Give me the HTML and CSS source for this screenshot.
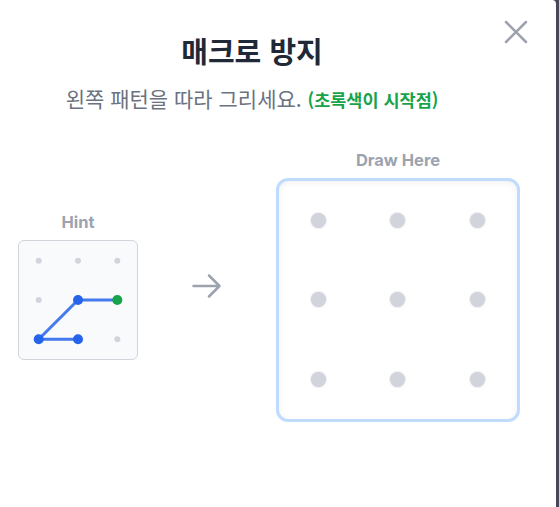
FILE: index.html
```html
<!DOCTYPE html>
<html lang="ko">
<head>
<meta charset="utf-8">
<link rel="stylesheet" href="styles.css">
</head>
<body>
<div class="modal">
  <button class="close" aria-label="close">
    <svg width="24" height="24" viewBox="0 0 24 24"><path d="M2 2 L22 22 M22 2 L2 22" stroke="#9ca3af" stroke-width="2.5" stroke-linecap="round" fill="none"/></svg>
  </button>
  <header class="head">
    <h1 class="title">매크로 방지</h1>
    <p class="sub">왼쪽 패턴을 따라 그리세요. <span class="start">(초록색이 시작점)</span></p>
  </header>
  <div class="row">
    <div class="col">
      <div class="label">Hint</div>
      <div class="hint">
        <svg width="118" height="118" viewBox="0 0 118 118">
          <g fill="#d1d5db">
            <circle cx="19.7" cy="19.7" r="3"/>
            <circle cx="59" cy="19.7" r="3"/>
            <circle cx="98.3" cy="19.7" r="3"/>
            <circle cx="19.7" cy="59" r="3"/>
            <circle cx="98.3" cy="98.3" r="3"/>
          </g>
          <polyline points="98.3,59 59,59 19.7,98.3 59,98.3" fill="none" stroke="#2563eb" stroke-opacity="0.85" stroke-width="3" stroke-linejoin="round"/>
          <circle cx="59" cy="59" r="5" fill="#2563eb"/>
          <circle cx="19.7" cy="98.3" r="5" fill="#2563eb"/>
          <circle cx="59" cy="98.3" r="5" fill="#2563eb"/>
          <circle cx="98.3" cy="59" r="5" fill="#16a34a"/>
        </svg>
      </div>
    </div>
    <div class="arrow">
      <svg width="30" height="26" viewBox="0 0 30 26"><path d="M1.5 13 H27.5 M17 2.5 L27.5 13 L17 23.5" stroke="#9ca3af" stroke-width="2.5" stroke-linecap="round" stroke-linejoin="round" fill="none"/></svg>
    </div>
    <div class="col">
      <div class="label">Draw Here</div>
      <div class="pad">
        <span class="dot"></span><span class="dot"></span><span class="dot"></span>
        <span class="dot"></span><span class="dot"></span><span class="dot"></span>
        <span class="dot"></span><span class="dot"></span><span class="dot"></span>
      </div>
    </div>
  </div>
</div>
</body>
</html>
```
FILE: styles.css
```css
html, body {
  margin: 0;
  padding: 0;
}
body {
  background: #474757;
  width: 559px;
  height: 507px;
  overflow: hidden;
  font-family: Inter, "Noto Sans CJK KR", sans-serif;
}
.modal {
  position: relative;
  width: 556px;
  height: 507px;
  background: #ffffff;
  border-top-right-radius: 4px;
}
.close {
  position: absolute;
  top: 20px;
  right: 28px;
  width: 24px;
  height: 24px;
  padding: 0;
  border: 0;
  background: none;
}
.close svg { display: block; }
.head {
  padding: 30px 52px 0 0;
  text-align: center;
}
.title {
  margin: 0;
  font-family: "Noto Sans CJK KR", sans-serif;
  font-size: 29px;
  font-weight: 700;
  line-height: 40px;
  color: #1f2937;
}
.sub {
  margin: 14px 0 0;
  font-family: "Noto Sans CJK KR", sans-serif;
  font-size: 21px;
  line-height: 28px;
  color: #6b7280;
}
.start {
  font-size: 17.5px;
  font-weight: 700;
  color: #16a34a;
}
.row {
  display: flex;
  align-items: center;
  gap: 54px;
  padding: 36px 0 0 18px;
}
.col {
  display: flex;
  flex-direction: column;
  align-items: center;
  gap: 8px;
}
.label {
  font-size: 16.5px;
  font-weight: 700;
  line-height: 20px;
  color: #9ca3af;
}
.hint {
  width: 118px;
  height: 118px;
  border: 1px solid #d1d5db;
  border-radius: 6px;
  background: #f9fafb;
}
.hint svg { display: block; }
.arrow {
  width: 30px;
  height: 26px;
}
.arrow svg { display: block; }
.pad {
  width: 238px;
  height: 238px;
  border: 3px solid #bfdbfe;
  border-radius: 12px;
  background: #ffffff;
  box-shadow: inset 0 2px 6px rgba(0, 0, 0, 0.06);
  display: grid;
  grid-template-columns: repeat(3, 1fr);
  grid-template-rows: repeat(3, 1fr);
  place-items: center;
}
.dot {
  width: 15px;
  height: 15px;
  border-radius: 50%;
  background: #d1d5db;
  box-shadow: 0 0 2px rgba(156, 163, 175, 0.6);
}
```
